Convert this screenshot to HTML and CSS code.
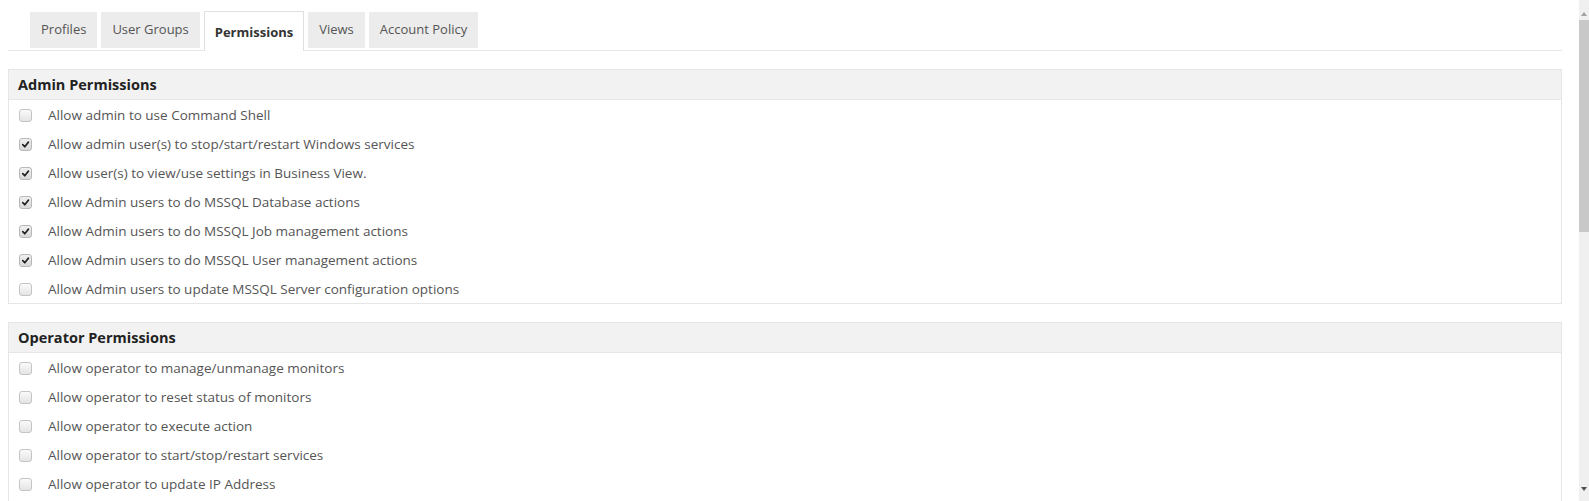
FILE: index.html
```html
<!DOCTYPE html>
<html lang="en">
<head>
  <meta charset="UTF-8" />
  <title>Permissions</title>
  <link rel="stylesheet" href="styles.css">
</head>
<body>
  <div class="page">
    <main class="main">
      <nav class="tabs">
        <a href="#" class="tab">Profiles</a>
        <a href="#" class="tab">User Groups</a>
        <a href="#" class="tab active">Permissions</a>
        <a href="#" class="tab">Views</a>
        <a href="#" class="tab">Account Policy</a>
      </nav>

      <section class="panel">
        <div class="panel-head">Admin Permissions</div>
        <label class="row"><span class="check"></span>Allow admin to use Command Shell</label>
        <label class="row"><span class="check on"><svg viewBox="0 0 12 12"><path d="M3 6.2l2.2 2.3L9.2 3.4"/></svg></span>Allow admin user(s) to stop/start/restart Windows services</label>
        <label class="row"><span class="check on"><svg viewBox="0 0 12 12"><path d="M3 6.2l2.2 2.3L9.2 3.4"/></svg></span>Allow user(s) to view/use settings in Business View.</label>
        <label class="row"><span class="check on"><svg viewBox="0 0 12 12"><path d="M3 6.2l2.2 2.3L9.2 3.4"/></svg></span>Allow Admin users to do MSSQL Database actions</label>
        <label class="row"><span class="check on"><svg viewBox="0 0 12 12"><path d="M3 6.2l2.2 2.3L9.2 3.4"/></svg></span>Allow Admin users to do MSSQL Job management actions</label>
        <label class="row"><span class="check on"><svg viewBox="0 0 12 12"><path d="M3 6.2l2.2 2.3L9.2 3.4"/></svg></span>Allow Admin users to do MSSQL User management actions</label>
        <label class="row"><span class="check"></span>Allow Admin users to update MSSQL Server configuration options</label>
      </section>

      <section class="panel more">
        <div class="panel-head">Operator Permissions</div>
        <label class="row"><span class="check"></span>Allow operator to manage/unmanage monitors</label>
        <label class="row"><span class="check"></span>Allow operator to reset status of monitors</label>
        <label class="row"><span class="check"></span>Allow operator to execute action</label>
        <label class="row"><span class="check"></span>Allow operator to start/stop/restart services</label>
        <label class="row"><span class="check"></span>Allow operator to update IP Address</label>
      </section>
    </main>

    <div class="scrollbar">
      <span class="arrow up"></span>
      <div class="thumb"></div>
      <span class="arrow down"></span>
    </div>
  </div>
</body>
</html>
```

FILE: styles.css
```css
body {
  margin: 0;
  background-color: #fff;
  color: #555;
  font-family: 'Open Sans', 'Liberation Sans', sans-serif;
  font-size: 13.5px;
}
.page {
  display: flex;
  height: 501px;
  overflow: hidden;
}
.main {
  flex: 1;
  padding: 11px 17px 0 8px;
  min-width: 0;
}

/* tabs */
.tabs {
  display: flex;
  gap: 4px;
  padding-left: 22px;
  height: 39px;
  border-bottom: 1px solid #e6e6e6;
  font-size: 13px;
}
.tab {
  margin-top: 1px;
  height: 36px;
  padding: 0 11px 2px;
  box-sizing: border-box;
  display: flex;
  align-items: center;
  background-color: #ececec;
  color: #555;
  text-decoration: none;
}
.tab.active {
  margin-top: 0;
  height: 40px;
  margin-bottom: -1px;
  padding: 0 10px;
  background-color: #fff;
  border: 1px solid #e0e0e0;
  border-bottom: none;
  color: #333;
  font-weight: bold;
}

/* panels */
.panel {
  margin-top: 18px;
  border: 1px solid #e6e6e6;
}
.panel.more {
  padding-bottom: 20px;
}
.panel-head {
  height: 29px;
  line-height: 29px;
  padding-left: 9px;
  background-color: #f2f2f2;
  border-bottom: 1px solid #e6e6e6;
  color: #222;
  font-size: 14.5px;
  font-weight: bold;
}
.row {
  height: 29px;
  display: flex;
  align-items: center;
  color: #555;
  cursor: pointer;
}
.check {
  width: 11px;
  height: 11px;
  margin: 1px 16px 0 10px;
  border: 1px solid #c4c4c4;
  border-radius: 3px;
  background: linear-gradient(#fafafa, #e4e4e4);
  display: flex;
  align-items: center;
  justify-content: center;
}
.check.on {
  border-color: #b8b8b8;
  background: linear-gradient(#f0f0f0, #d8d8d8);
}
.check svg {
  width: 11px;
  height: 11px;
  fill: none;
  stroke: #222;
  stroke-width: 1.8;
  stroke-linecap: round;
  stroke-linejoin: round;
}

/* scrollbar */
.scrollbar {
  width: 10px;
  background-color: #f0f0f0;
  display: flex;
  flex-direction: column;
  align-items: center;
}
.thumb {
  width: 10px;
  height: 212px;
  margin-top: 4px;
  background-color: #c8c8c8;
}
.arrow {
  width: 0;
  height: 0;
  border-left: 3px solid transparent;
  border-right: 3px solid transparent;
}
.arrow.up {
  margin-top: 12px;
  border-bottom: 4px solid #a0a0a0;
}
.arrow.down {
  margin-top: auto;
  margin-bottom: 10px;
  border-top: 4px solid #505050;
}
```
